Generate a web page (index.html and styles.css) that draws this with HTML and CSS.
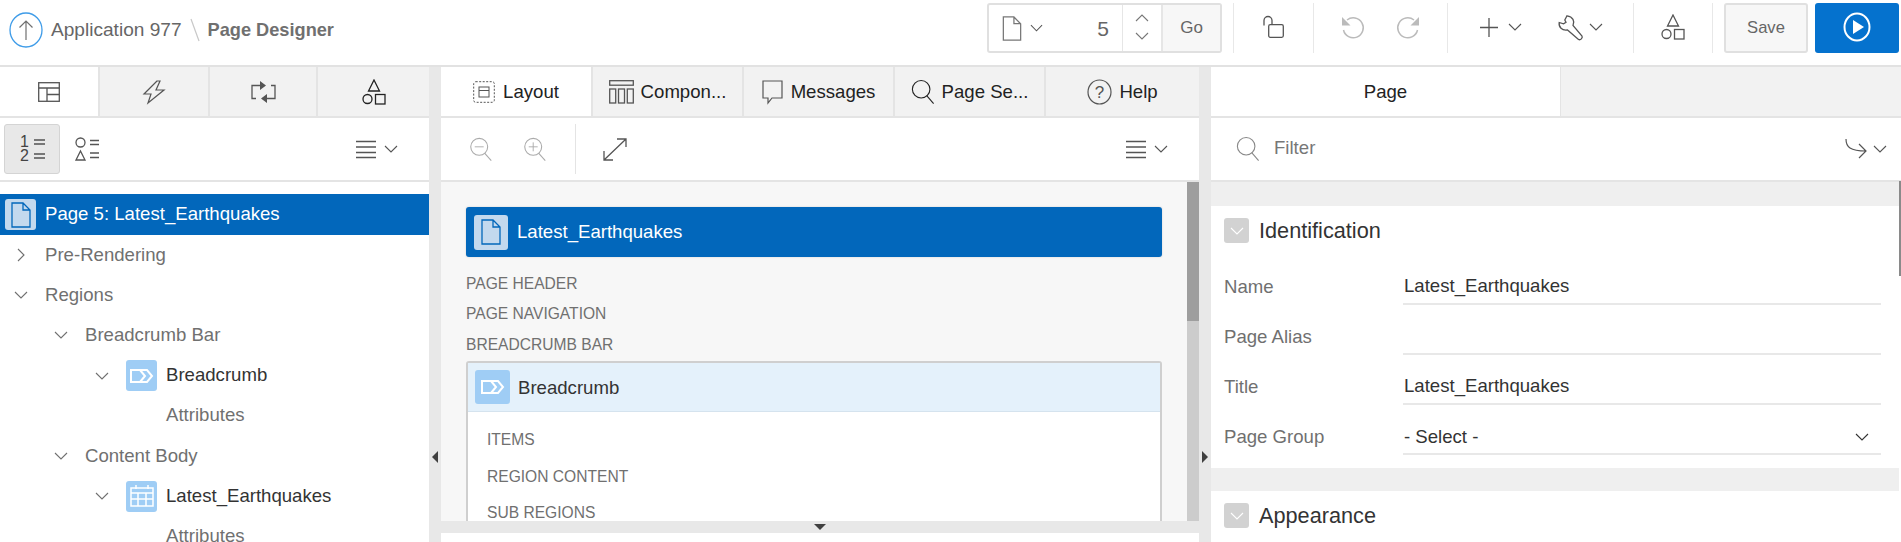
FILE: index.html
```html
<!DOCTYPE html>
<html lang="en">
<head>
<meta charset="utf-8">
<title>Page Designer</title>
<link rel="stylesheet" href="styles.css">
</head>
<body>
<svg class="defs" width="0" height="0" aria-hidden="true">
  <symbol id="chev" viewBox="0 0 14 8"><path d="M1 1l6 6 6-6" fill="none" stroke="currentColor" stroke-width="1.100"/></symbol>
  <symbol id="chevr" viewBox="0 0 8 14"><path d="M1 1l6 6-6 6" fill="none" stroke="currentColor" stroke-width="1.100"/></symbol>
  <symbol id="menu" viewBox="0 0 20 19"><path d="M0 1.500h20M0 7h20M0 12.500h20M0 17.500h20" fill="none" stroke="currentColor" stroke-width="1.300"/></symbol>
  <symbol id="shapes" viewBox="0 0 24 26"><g fill="none" stroke="currentColor" stroke-width="1.300"><path d="M12 1l5.500 11h-11z"/><circle cx="5.500" cy="20" r="4.500"/><rect x="13.500" y="15.500" width="9.500" height="9.500"/></g></symbol>
  <symbol id="lens" viewBox="0 0 26 28"><g fill="none" stroke="currentColor" stroke-width="1.200"><circle cx="11" cy="11" r="9.500"/><path d="M17 18l7.500 8.500"/></g></symbol>
  <symbol id="page" viewBox="0 0 20 26"><path d="M1 1h11l7 7v17H1zM12 1v7h7" fill="none" stroke="currentColor" stroke-width="1.300"/></symbol>
  <symbol id="crumb" viewBox="0 0 24 14"><g fill="none" stroke="#fff" stroke-width="2"><path d="M1 1h16l5 6-5 6H1z"/><path d="M10 1l5 6-5 6"/></g></symbol>
</svg>

<header class="topbar">
  <div class="crumbs">
    <svg class="up" width="34" height="36" viewBox="0 0 34 36"><ellipse cx="17" cy="18" rx="16" ry="17" fill="none" stroke="#3f9ce8" stroke-width="1.300"/><path d="M17 28V9M10.500 15.500L17 9l6.500 6.500" fill="none" stroke="#707070" stroke-width="1.200"/></svg>
    <span class="app">Application 977</span>
    <svg class="slash" width="10" height="22" viewBox="0 0 10 22"><path d="M1 0l8 22" stroke="#c8c8c8" stroke-width="1.200"/></svg>
    <span class="title">Page Designer</span>
  </div>
  <div class="tools">
    <div class="pagebox">
      <div class="pagepick">
        <svg class="ic-file" width="20" height="25"><use href="#page"/></svg>
        <svg width="13" height="8"><use href="#chev"/></svg>
      </div>
      <span class="pagenum">5</span>
      <div class="spin">
        <svg width="14" height="8" class="flip"><use href="#chev"/></svg>
        <svg width="14" height="8"><use href="#chev"/></svg>
      </div>
      <span class="go">Go</span>
    </div>
    <div class="grp g-lock">
      <svg width="21" height="22" viewBox="0 0 21 22"><g fill="none" stroke="#555" stroke-width="1.300"><rect x="5.700" y="8.700" width="14.600" height="12.600" rx="1.500"/><path d="M1 9.500V4.500a4 4 0 0 1 8 0v4"/></g></svg>
    </div>
    <div class="grp g-undo">
      <svg width="24" height="24" viewBox="0 0 24 24"><path d="M6 5a10 10 0 1 1-3.500 10" fill="none" stroke="#bbb" stroke-width="1.500"/><path d="M1 2v8.500h8.500z" fill="#bbb"/></svg>
      <svg width="24" height="24" viewBox="0 0 24 24"><path d="M18 5a10 10 0 1 0 3.500 10" fill="none" stroke="#bbb" stroke-width="1.500"/><path d="M23 2v8.500h-8.500z" fill="#bbb"/></svg>
    </div>
    <div class="grp g-add">
      <svg width="18" height="19" viewBox="0 0 18 19"><path d="M9 0v19M0 9.500h18" stroke="#555" stroke-width="1.300"/></svg>
      <svg class="c1" width="14" height="8"><use href="#chev"/></svg>
      <svg class="wrench" width="25" height="25" viewBox="0 0 25 25"><path d="M9 .8L6.800 5 8 7.200 5.500 8.800 1.200 7.500C.5 12 4 16 9.500 15l11 9.500c2 1 4.500-1.500 3.500-3.500L15 10.500C17 6.500 15 1.500 9 .8z" fill="none" stroke="#555" stroke-width="1.300"/></svg>
      <svg class="c2" width="14" height="8"><use href="#chev"/></svg>
    </div>
    <div class="grp g-shapes">
      <svg width="24" height="26"><use href="#shapes"/></svg>
    </div>
    <button class="save" type="button">Save</button>
    <button class="run" type="button">
      <svg width="28" height="30" viewBox="0 0 28 30"><ellipse cx="14" cy="15" rx="12.500" ry="13.500" fill="none" stroke="#fff" stroke-width="2"/><path d="M10 8l11 7-11 7z" fill="#fff"/></svg>
    </button>
  </div>
</header>

<main class="work">
  <section class="col col-left">
    <nav class="tabs">
      <div class="tab on t-l1"><svg width="22" height="20" viewBox="0 0 22 20"><g fill="none" stroke="#555" stroke-width="1.300"><rect x=".7" y=".7" width="20.600" height="18.600"/><path d="M.7 6h20.600M9 6v13.300M9 12.500h12.300"/></g></svg></div>
      <div class="tab t-l2"><svg width="22" height="24" viewBox="0 0 22 24"><path d="M14 1L1 14h7l-3 9 16-13h-8l4-9z" fill="none" stroke="#555" stroke-width="1.200"/></svg></div>
      <div class="tab t-l3"><svg width="25" height="22" viewBox="0 0 25 22"><g fill="none" stroke="#555" stroke-width="1.300"><path d="M9 4.500H1v13h4M16 17.500h8v-13h-4"/></g><path d="M9 0l6 4.500L9 9zM16 13l-6 4.500 6 4.500z" fill="#555"/></svg></div>
      <div class="tab t-l4"><svg width="24" height="26"><use href="#shapes"/></svg></div>
    </nav>
    <div class="bar">
      <div class="toggle"><span class="n12"><b>1</b><i></i><b>2</b><i></i></span></div>
      <svg class="list2" width="25" height="25" viewBox="0 0 25 25"><g fill="none" stroke="#555" stroke-width="1.300"><circle cx="5.500" cy="5.500" r="4.500"/><path d="M5.500 14l4.500 9H1z"/><path d="M15 3.500h9M15 7.500h9M15 16h9M15 20.500h9"/></g></svg>
      <div class="menu"><svg width="20" height="19"><use href="#menu"/></svg><svg width="14" height="8"><use href="#chev"/></svg></div>
    </div>
    <ul class="tree">
      <li class="row sel">
        <span class="tile tile-page"><svg width="20" height="26"><use href="#page"/></svg></span>
        <span>Page 5: Latest_Earthquakes</span>
      </li>
      <li class="row l1"><span class="tw"><svg class="tw-r" width="8" height="14"><use href="#chevr"/></svg></span><span>Pre-Rendering</span></li>
      <li class="row l1"><span class="tw"><svg width="14" height="8"><use href="#chev"/></svg></span><span>Regions</span></li>
      <li class="row l2"><span class="tw"><svg width="14" height="8"><use href="#chev"/></svg></span><span>Breadcrumb Bar</span></li>
      <li class="row l3"><span class="tw"><svg width="14" height="8"><use href="#chev"/></svg></span><span class="tile tile-reg"><svg width="24" height="14"><use href="#crumb"/></svg></span><span class="dark">Breadcrumb</span></li>
      <li class="row l4"><span>Attributes</span></li>
      <li class="row l2"><span class="tw"><svg width="14" height="8"><use href="#chev"/></svg></span><span>Content Body</span></li>
      <li class="row l3"><span class="tw"><svg width="14" height="8"><use href="#chev"/></svg></span><span class="tile tile-reg"><svg width="24" height="22" viewBox="0 0 24 22"><g fill="none" stroke="#fff" stroke-width="1.500"><rect x="1" y="3" width="22" height="18"/><path d="M1 8h22M1 14h22M8 8v13M16 8v13M6 0v4M18 0v4"/></g></svg></span><span class="dark">Latest_Earthquakes</span></li>
      <li class="row l4"><span>Attributes</span></li>
    </ul>
  </section>

  <div class="gutter"><span class="tri tri-l"></span></div>

  <section class="col col-mid">
    <nav class="tabs">
      <div class="tab on t-m1"><svg width="22" height="22" viewBox="0 0 22 22"><rect x=".7" y=".7" width="20.600" height="20.600" rx="2" fill="none" stroke="#555" stroke-dasharray="2 1.500"/><g fill="none" stroke="#555"><rect x="6" y="6" width="10" height="10"/><path d="M6 9.500h10"/></g></svg><span>Layout</span></div>
      <div class="tab t-m2"><svg width="25" height="24" viewBox="0 0 25 24"><g fill="none" stroke="#555" stroke-width="1.300"><rect x=".7" y=".7" width="23.600" height="4.500"/><rect x=".7" y="9" width="6" height="14"/><rect x="9.500" y="9" width="6" height="14"/><rect x="18.300" y="9" width="6" height="14"/></g></svg><span>Compon...</span></div>
      <div class="tab t-m3"><svg width="21" height="24" viewBox="0 0 21 24"><path d="M1 1h19v17H10l-4 5v-5H1z" fill="none" stroke="#555" stroke-width="1.200"/></svg><span>Messages</span></div>
      <div class="tab t-m4"><svg width="24" height="26"><use href="#lens"/></svg><span>Page Se...</span></div>
      <div class="tab t-m5"><svg width="25" height="26" viewBox="0 0 25 26"><ellipse cx="12.500" cy="13" rx="11.500" ry="12" fill="none" stroke="#555" stroke-width="1.200"/><text x="12.500" y="18.500" text-anchor="middle" class="q">?</text></svg><span>Help</span></div>
    </nav>
    <div class="bar">
      <svg class="zo" width="24" height="25" viewBox="0 0 26 28"><use href="#lens"/><path d="M6 11h10" stroke="currentColor"/></svg>
      <svg class="zi" width="24" height="25" viewBox="0 0 26 28"><use href="#lens"/><path d="M6 11h10M11 6v10" stroke="currentColor"/></svg>
      <span class="vsep"></span>
      <svg class="expand" width="24" height="23" viewBox="0 0 24 23"><path d="M1 22L23 1M14 1h9v8M1 13v9h9" fill="none" stroke="#555" stroke-width="1.300"/></svg>
      <div class="menu"><svg width="20" height="19"><use href="#menu"/></svg><svg width="14" height="8"><use href="#chev"/></svg></div>
    </div>
    <div class="canvas">
      <div class="scroll">
        <div class="pagehead">
          <span class="tile tile-page2"><svg width="20" height="26"><use href="#page"/></svg></span>
          <span>Latest_Earthquakes</span>
        </div>
        <div class="slot s1">PAGE HEADER</div>
        <div class="slot s2">PAGE NAVIGATION</div>
        <div class="slot s3">BREADCRUMB BAR</div>
        <div class="region">
          <div class="reghead">
            <span class="tile tile-reg2"><svg width="24" height="14"><use href="#crumb"/></svg></span>
            <span class="regname">Breadcrumb</span>
          </div>
          <div class="regbody">
            <div>ITEMS</div>
            <div>REGION CONTENT</div>
            <div>SUB REGIONS</div>
          </div>
        </div>
      </div>
      <div class="vbar"><span></span></div>
    </div>
    <div class="hsplit"><span class="tri tri-d"></span></div>
    <div class="below"></div>
  </section>

  <div class="gutter"><span class="tri tri-r"></span></div>

  <section class="col col-right">
    <nav class="tabs">
      <div class="tab on t-r1"><span>Page</span></div>
      <div class="tab t-r2"></div>
    </nav>
    <div class="bar filter">
      <svg class="flens" width="24" height="26"><use href="#lens"/></svg>
      <span class="ftext">Filter</span>
      <div class="menu">
        <svg width="22" height="22" viewBox="0 0 22 22"><path d="M1 1c0 8 4 12 20 12M14 6l7 7-7 7" fill="none" stroke="#555" stroke-width="1.200"/></svg>
        <svg width="14" height="8"><use href="#chev"/></svg>
      </div>
    </div>
    <div class="props">
      <div class="scrollmark"></div>
      <div class="band b1"></div>
      <div class="sect sect-id">
        <div class="secthead"><span class="coll"><svg width="14" height="8"><use href="#chev"/></svg></span><h2>Identification</h2></div>
        <div class="field f-first"><label>Name</label><div class="val">Latest_Earthquakes</div></div>
        <div class="field"><label>Page Alias</label><div class="val"></div></div>
        <div class="field"><label>Title</label><div class="val">Latest_Earthquakes</div></div>
        <div class="field"><label>Page Group</label><div class="val sel-val"><span>- Select -</span><svg width="14" height="8"><use href="#chev"/></svg></div></div>
      </div>
      <div class="band b2"></div>
      <div class="sect">
        <div class="secthead"><span class="coll"><svg width="14" height="8"><use href="#chev"/></svg></span><h2>Appearance</h2></div>
      </div>
    </div>
  </section>
</main>
</body>
</html>
```

FILE: styles.css
```css
* { box-sizing: border-box; }
html, body { margin: 0; padding: 0; height: 542px; overflow: hidden; background: #fff; }
body { font-family: "Liberation Sans", Arial, sans-serif; font-size: 18.600px; color: #333; }
svg { display: block; flex: none; overflow: visible; }
.defs { position: absolute; }
ul { list-style: none; margin: 0; padding: 0; }

/* top bar */
.topbar { height: 67px; border-bottom: 2px solid #e2e2e2; display: flex; align-items: flex-start; }
.crumbs { display: flex; align-items: center; height: 55px; padding: 5px 0 0 9px; }
.app { margin-left: 8px; font-size: 19.100px; color: #666; white-space: nowrap; }
.slash { margin: 0 8px; }
.title { font-size: 18.200px; font-weight: 700; color: #707070; white-space: nowrap; }
.tools { margin-left: auto; display: flex; align-items: flex-start; padding: 3px 2px 0 0; height: 53px; }
.pagebox { width: 235px; height: 50px; border: 2px solid #e0e0e0; border-radius: 3px; display: flex; align-items: stretch; color: #555; margin-right: 11px; }
.pagepick { display: flex; align-items: center; gap: 8px; padding-left: 13px; width: 100px; }
.ic-file { color: #777; }
.pagenum { width: 33px; font-size: 21px; line-height: 48px; color: #666; text-align: right; padding-right: 13px; }
.spin { width: 39px; border-left: 1px solid #e6e6e6; display: flex; flex-direction: column; justify-content: space-between; align-items: center; padding: 9px 0 11px; color: #777; }
.flip { transform: scaleY(-1); }
.go { flex: 1; background: #f7f7f7; border-left: 2px solid #e6e6e6; text-align: center; font-size: 17px; line-height: 46px; color: #666; }
.grp { height: 50px; display: flex; align-items: center; border-left: 1px solid #e8e8e8; color: #555; padding-bottom: 2px; }
.g-lock { width: 80px; justify-content: center; }
.g-undo { width: 134px; justify-content: center; gap: 31px; }
.g-add { width: 186px; padding-left: 32px; }
.c1 { margin-left: 10px; }
.wrench { margin-left: 36px; }
.c2 { margin-left: 6px; }
.g-shapes { width: 80px; justify-content: center; border-right: 1px solid #e8e8e8; }
.save { margin-left: 11px; width: 84px; height: 50px; background: #f7f7f7; border: 2px solid #e0e0e0; border-radius: 3px; font: 16.600px "Liberation Sans", Arial, sans-serif; color: #666; padding: 0; }
.run { margin-left: 7px; width: 84px; height: 50px; background: #0572ce; border: 0; border-radius: 3px; display: flex; align-items: center; justify-content: center; padding: 0 0 2px; }

/* workspace */
.work { display: grid; grid-template-columns: 429px 12px 758px 12px 690px; height: 475px; }
.col { display: flex; flex-direction: column; min-width: 0; height: 475px; overflow: hidden; }
.gutter { background: #e8e8e8; position: relative; }
.tri { position: absolute; width: 0; height: 0; }
.tri-l { left: 3px; top: 384px; border: 6px solid transparent; border-left-width: 0; border-right: 6px solid #404040; }
.tri-r { left: 3px; top: 384px; border: 6px solid transparent; border-right-width: 0; border-left: 6px solid #404040; }
.tri-d { left: 373px; top: 3px; border: 6px solid transparent; border-bottom-width: 0; border-top: 6px solid #404040; }

.tabs { display: flex; height: 51px; border-bottom: 2px solid #e4e4e4; flex: none; }
.tab { height: 49px; background: #f2f2f2; display: flex; align-items: center; justify-content: center; border-left: 2px solid #e4e4e4; color: #222; white-space: nowrap; }
.tab.on { background: #fff; }
.tab:first-child { border-left: 0; }
.t-l1 { width: 98px; } .t-l2 { width: 110px; } .t-l3 { width: 108px; } .t-l4 { width: 113px; }
.t-m1 { width: 150px; } .t-m2 { width: 151px; } .t-m3 { width: 151px; } .t-m4 { width: 151px; } .t-m5 { width: 155px; }
.tab span { margin-left: 8px; }
.t-m2 span, .t-m4 span, .t-m5 span { margin-left: 7px; }
.t-r1 { width: 350px; border-right: 1px solid #e4e4e4; }
.tab.t-r1 span { margin-left: 0; }
.t-r2 { flex: 1; border-left: 0; }
.q { font-size: 17px; fill: #555; font-family: "Liberation Sans", Arial, sans-serif; }

.bar { height: 64px; border-bottom: 2px solid #e4e4e4; display: flex; align-items: center; position: relative; flex: none; }
.toggle { margin-left: 4px; width: 56px; height: 50px; background: #e8e8e8; border: 1px solid #d4d4d4; border-radius: 3px; display: flex; align-items: center; justify-content: center; }
.n12 { display: grid; grid-template-columns: 10px 11px; column-gap: 4px; font-size: 16px; line-height: 14px; color: #444; align-items: center; }
.n12 b { font-weight: 400; text-align: center; }
.n12 i { display: block; height: 6px; border-top: 2px solid #777; border-bottom: 2px solid #777; }
.list2 { margin-left: 15px; }
.menu { margin-left: auto; display: flex; align-items: center; gap: 8px; color: #555; padding-right: 31px; }
.zo, .zi { color: #aaa; }
.zo { margin-left: 28px; }
.zi { margin-left: 30px; }
.vsep { width: 1px; height: 50px; background: #e4e4e4; margin: 0 27px 0 28px; }
.filter .menu { padding-right: 14px; gap: 6px; }
.flens { margin-left: 25px; color: #888; }
.ftext { margin-left: 14px; color: #777; padding-bottom: 2px; }

/* tree */
.tree { padding-top: 12px; color: #707070; }
.row { height: 40.200px; display: flex; align-items: center; white-space: nowrap; }
.row > span:last-child { padding-bottom: 1px; }
.sel { height: 41px; background: #0267bb; color: #fff; padding-left: 5px; gap: 9px; }
.tile { display: flex; align-items: center; justify-content: center; border-radius: 3px; flex: none; }
.tile-page { width: 31px; height: 31px; background: #c3d9ee; color: #0267bb; }
.tile-reg { width: 31px; height: 31px; background: #9fcdf5; margin-right: 9px; }
.tw { display: flex; width: 31px; color: #707070; flex: none; }
.tw-r { margin-left: 3px; }
.l1 { padding-left: 14px; }
.l2 { padding-left: 54px; }
.l3 { padding-left: 95px; }
.l4 { padding-left: 166px; }
.dark { color: #333; }

/* canvas */
.canvas { height: 339px; background: #f7f7f7; display: flex; flex: none; overflow: hidden; }
.scroll { flex: 1; padding: 25px 25px 0; overflow: hidden; }
.vbar { width: 12px; background: #ccc; flex: none; }
.vbar span { display: block; height: 139px; background: #9e9e9e; }
.pagehead { height: 50px; background: #0267bb; border-radius: 3px; color: #fff; display: flex; align-items: center; padding-left: 8px; gap: 9px; box-shadow: 0 0 2px #ccc; }
.tile-page2 { width: 34px; height: 35px; background: #c3d9ee; color: #0267bb; }
.slot { font-size: 15.600px; color: #707070; line-height: 20px; }
.s1 { margin-top: 17px; }
.s2 { margin-top: 10px; }
.s3 { margin-top: 11px; }
.region { margin-top: 6px; border: 2px solid #cfcfcf; border-radius: 3px; background: #fff; height: 240px; }
.reghead { height: 49px; background: #e4f1fb; border-bottom: 1px solid #d5e3ee; display: flex; align-items: center; padding-left: 7px; gap: 8px; color: #333; }
.regname { padding-top: 2px; }
.tile-reg2 { width: 35px; height: 34px; background: #9fcdf5; }
.regbody { padding: 18px 0 0 19px; font-size: 15.600px; color: #707070; }
.regbody div { height: 36.500px; line-height: 20px; }
.hsplit { height: 12px; background: #e8e8e8; position: relative; flex: none; }
.below { flex: 1; background: #fff; }

/* properties */
.props { position: relative; flex: 1; }
.scrollmark { position: absolute; right: 0; top: -1px; width: 2px; height: 95px; background: #8a8a8a; }
.band { background: #efefef; margin-right: 2px; }
.b1 { height: 24px; }
.b2 { height: 23px; }
.sect { padding: 12px 20px 0 13px; }
.sect-id { padding-bottom: 13px; }
.secthead { display: flex; align-items: center; height: 25px; }
.coll { width: 25px; height: 25px; background: #d2d2d2; border-radius: 3px; display: flex; align-items: center; justify-content: center; color: #fff; }
h2 { margin: 0 0 0 10px; font-size: 21.700px; font-weight: 400; color: #333; line-height: 25px; }
.field { height: 50px; display: flex; }
.f-first { margin-top: 12px; }
.field label { width: 179px; flex: none; color: #707070; line-height: 36px; padding-top: 14px; }
.val { flex: 1; border-bottom: 2px solid #e8e8e8; line-height: 36px; padding: 13px 0 0 1px; color: #333; }
.sel-val { display: flex; justify-content: space-between; align-items: center; padding: 15px 12px 0 1px; }
```
